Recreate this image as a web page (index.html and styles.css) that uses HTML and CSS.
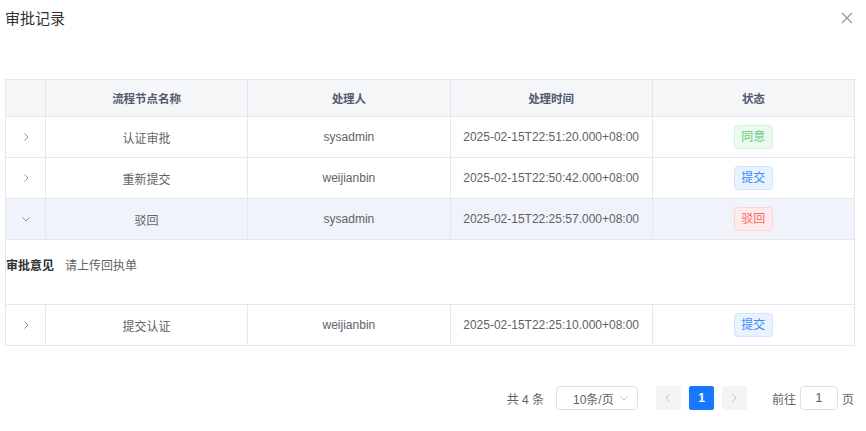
FILE: index.html
```html
<!DOCTYPE html>
<html lang="zh-CN">
<head>
    <meta charset="UTF-8">
    <title>审批记录</title>
    <link rel="stylesheet" href="styles.css">
</head>
<body>
    <div class="dialog">
        <div class="dialog-head">
            <span class="dialog-title">审批记录</span>
            <span class="dialog-close">
                <svg width="12" height="12" viewBox="0 0 12 12"><path d="M1 1L11 11M11 1L1 11" stroke="#909399" stroke-width="1.1" fill="none"/></svg>
            </span>
        </div>

        <table class="records">
            <colgroup>
                <col class="c-exp">
                <col>
                <col>
                <col>
                <col>
            </colgroup>
            <thead>
                <tr>
                    <th></th>
                    <th>流程节点名称</th>
                    <th>处理人</th>
                    <th>处理时间</th>
                    <th>状态</th>
                </tr>
            </thead>
            <tbody>
                <tr>
                    <td class="exp"><svg width="10" height="10" viewBox="0 0 10 10"><path d="M3.5 1.5L7 5L3.5 8.5" stroke="#909399" fill="none"/></svg></td>
                    <td>认证审批</td>
                    <td>sysadmin</td>
                    <td>2025-02-15T22:51:20.000+08:00</td>
                    <td><span class="tag tag-ok">同意</span></td>
                </tr>
                <tr>
                    <td class="exp"><svg width="10" height="10" viewBox="0 0 10 10"><path d="M3.5 1.5L7 5L3.5 8.5" stroke="#909399" fill="none"/></svg></td>
                    <td>重新提交</td>
                    <td>weijianbin</td>
                    <td>2025-02-15T22:50:42.000+08:00</td>
                    <td><span class="tag tag-sub">提交</span></td>
                </tr>
                <tr class="open">
                    <td class="exp"><svg width="10" height="10" viewBox="0 0 10 10"><path d="M1.5 3.5L5 7L8.5 3.5" stroke="#909399" fill="none"/></svg></td>
                    <td>驳回</td>
                    <td>sysadmin</td>
                    <td>2025-02-15T22:25:57.000+08:00</td>
                    <td><span class="tag tag-rej">驳回</span></td>
                </tr>
                <tr class="detail">
                    <td colspan="5"><b>审批意见</b><span class="opinion">请上传回执单</span></td>
                </tr>
                <tr>
                    <td class="exp"><svg width="10" height="10" viewBox="0 0 10 10"><path d="M3.5 1.5L7 5L3.5 8.5" stroke="#909399" fill="none"/></svg></td>
                    <td>提交认证</td>
                    <td>weijianbin</td>
                    <td>2025-02-15T22:25:10.000+08:00</td>
                    <td><span class="tag tag-sub">提交</span></td>
                </tr>
            </tbody>
        </table>

        <div class="pager">
            <span class="total">共 4 条</span>
            <span class="sizes">10条/页
                <svg width="10" height="10" viewBox="0 0 10 10"><path d="M1.5 3.5L5 7L8.5 3.5" stroke="#c0c4cc" fill="none"/></svg>
            </span>
            <span class="pbtn"><svg width="10" height="10" viewBox="0 0 10 10"><path d="M6.5 1.5L3 5L6.5 8.5" stroke="#c0c4cc" fill="none"/></svg></span>
            <span class="pbtn cur">1</span>
            <span class="pbtn"><svg width="10" height="10" viewBox="0 0 10 10"><path d="M3.5 1.5L7 5L3.5 8.5" stroke="#c0c4cc" fill="none"/></svg></span>
            <span class="jump">前往</span>
            <span class="jump-input">1</span>
            <span class="jump-end">页</span>
        </div>
    </div>
</body>
</html>
```

FILE: styles.css
```css
body {
    margin: 0px;
    padding: 0px;
    background: #fff;
    font-family: "Liberation Sans", "Noto Sans CJK SC", sans-serif;
    color: #606266;
}

.dialog {
    padding: 0px 12px 0px 5px;
}

.dialog-head {
    display: flex;
    justify-content: space-between;
    align-items: flex-start;
    height: 79px;
}

.dialog-title {
    margin-top: 8px;
    font-size: 15px;
    line-height: 22px;
    color: #303133;
}

.dialog-close {
    margin-top: 10px;
    margin-right: 1px;
}

.records {
    width: 850px;
    border-collapse: collapse;
    table-layout: fixed;
    font-size: 12px;
    border: 1px solid #e4e7ed;
}

.c-exp {
    width: 40px;
}

.records th {
    height: 36px;
    background: #f5f6f8;
    color: #515a6e;
    font-size: 11.5px;
    font-weight: bold;
    border: 1px solid #e4e7ed;
    padding: 0px;
}

.records td {
    height: 40px;
    text-align: center;
    border: 1px solid #e4e7ed;
    padding: 0px;
}

.records td.exp svg {
    display: block;
    margin: 0 auto;
}

.records tr.open td {
    background: #f0f3f9;
}

.records tr.detail td {
    height: 48px;
    padding-top: 16px;
    vertical-align: top;
    text-align: left;
    font-size: 12px;
    color: #606266;
}

.detail b {
    color: #303133;
}

.opinion {
    margin-left: 11px;
}

.tag {
    display: inline-block;
    width: 37px;
    height: 22px;
    line-height: 22px;
    font-size: 12px;
    border-radius: 4px;
    border: 1px solid;
}

.tag-ok {
    background: #ebf9ee;
    border-color: #d3f2da;
    color: #5ec77a;
}

.tag-sub {
    background: #e8f3ff;
    border-color: #cfe5ff;
    color: #3b8cf6;
}

.tag-rej {
    background: #ffebeb;
    border-color: #ffd3d3;
    color: #f56c6c;
}

.pager {
    display: flex;
    justify-content: flex-end;
    align-items: center;
    margin-top: 40px;
    font-size: 12px;
    color: #606266;
}

.total {
    margin-right: 12px;
}

.sizes {
    width: 82px;
    height: 24px;
    border: 1px solid #dcdfe6;
    border-radius: 4px;
    display: flex;
    align-items: center;
    justify-content: space-between;
    padding: 0px 8px 0px 16px;
    box-sizing: border-box;
    margin-right: 18px;
}

.pbtn {
    width: 25px;
    height: 24px;
    background: #f4f4f5;
    border-radius: 2px;
    display: flex;
    align-items: center;
    justify-content: center;
    margin-right: 8px;
}

.pbtn.cur {
    background: #1677ff;
    color: #fff;
    font-weight: bold;
}

.jump {
    margin-left: 17px;
}

.jump-input {
    width: 38px;
    height: 24px;
    line-height: 22px;
    border: 1px solid #dcdfe6;
    border-radius: 4px;
    text-align: center;
    margin: 0px 4px;
    box-sizing: border-box;
    font-size: 13px;
}
```
